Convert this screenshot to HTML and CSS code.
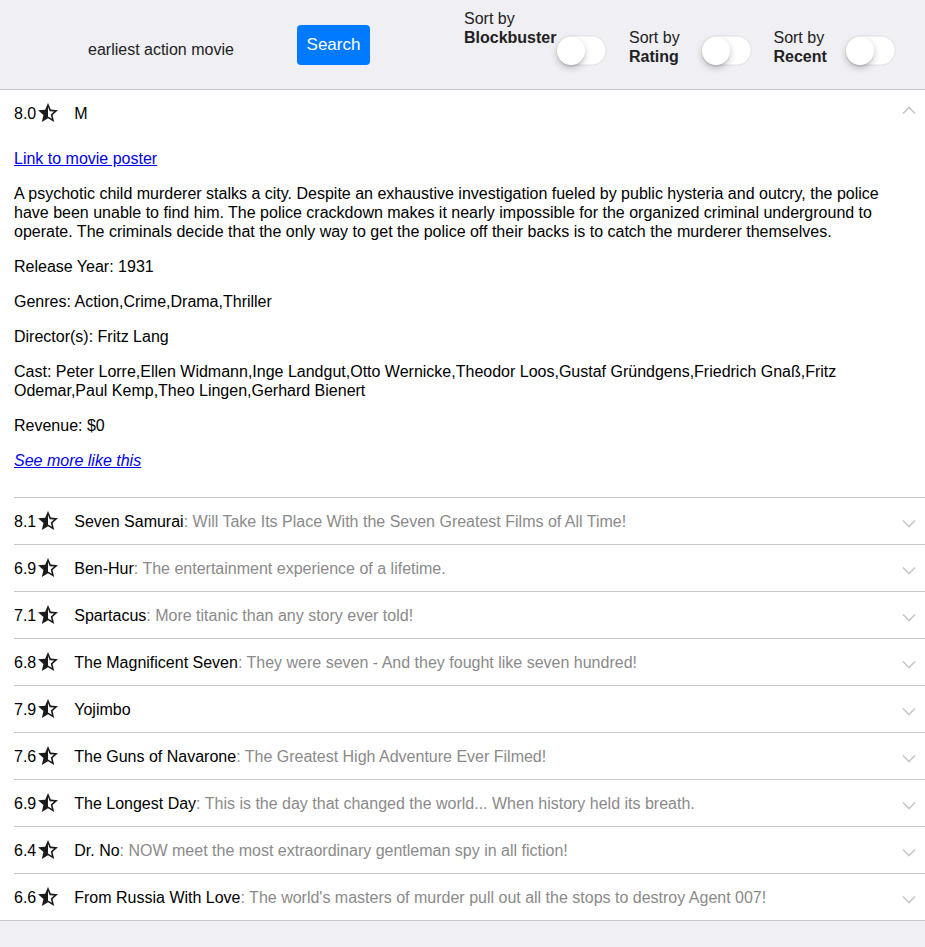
FILE: index.html
```html
<!DOCTYPE html>
<html lang="en">
<head>
<meta charset="utf-8">
<title>Movie search</title>
<link rel="stylesheet" href="styles.css">
</head>
<body>
<header class="toolbar">
  <input class="query" type="text" value="earliest action movie" aria-label="Query">
  <button class="search-btn" type="button">Search</button>
  <div class="sorts">
    <label class="sort sort--raised"><span class="sort-label">Sort by<br><b>Blockbuster</b></span><span class="toggle"><span class="knob"></span></span></label>
    <label class="sort"><span class="sort-label">Sort by<br><b>Rating</b></span><span class="toggle"><span class="knob"></span></span></label>
    <label class="sort"><span class="sort-label">Sort by<br><b>Recent</b></span><span class="toggle"><span class="knob"></span></span></label>
  </div>
</header>
<main class="list">
  <section class="item">
    <div class="item-head">
      <span class="rating">8.0</span>
      <svg class="star" viewBox="0 0 24 24"><path d="M22 9.24l-7.19-.62L12 2 9.19 8.63 2 9.24l5.46 4.730L5.82 21 12 17.27 18.18 21l-1.63-7.03L22 9.24zM12 15.4V6.1l1.71 4.04 4.38.38-3.32 2.88 1 4.28L12 15.4z"/></svg>
      <span class="title">M</span>
      <svg class="chev chev--up" viewBox="0 0 24 24"><path d="M6 11.5l6 6 6-6"/></svg>
    </div>
    <div class="item-body">
      <p><a href="#">Link to movie poster</a></p>
      <p>A psychotic child murderer stalks a city. Despite an exhaustive investigation fueled by public hysteria and outcry, the police have been unable to find him. The police crackdown makes it nearly impossible for the organized criminal underground to operate. The criminals decide that the only way to get the police off their backs is to catch the murderer themselves.</p>
      <p>Release Year: 1931</p>
      <p>Genres: Action,Crime,Drama,Thriller</p>
      <p>Director(s): Fritz Lang</p>
      <p>Cast: Peter Lorre,Ellen Widmann,Inge Landgut,Otto Wernicke,Theodor Loos,Gustaf Gründgens,Friedrich Gnaß,Fritz Odemar,Paul Kemp,Theo Lingen,Gerhard Bienert</p>
      <p>Revenue: $0</p>
      <p><a class="more" href="#">See more like this</a></p>
    </div>
  </section>
  <section class="item"><div class="item-head"><span class="rating">8.1</span><svg class="star" viewBox="0 0 24 24"><path d="M22 9.24l-7.19-.62L12 2 9.19 8.63 2 9.24l5.46 4.73L5.82 21 12 17.27 18.18 21l-1.63-7.03L22 9.24zM12 15.4V6.1l1.71 4.04 4.38.38-3.32 2.88 1 4.28L12 15.4z"/></svg><span class="title">Seven Samurai<span class="tagline">: Will Take Its Place With the Seven Greatest Films of All Time!</span></span><svg class="chev" viewBox="0 0 24 24"><path d="M6 11.5l6 6 6-6"/></svg></div></section>
  <section class="item"><div class="item-head"><span class="rating">6.9</span><svg class="star" viewBox="0 0 24 24"><path d="M22 9.24l-7.19-.62L12 2 9.19 8.63 2 9.24l5.46 4.73L5.82 21 12 17.27 18.18 21l-1.63-7.03L22 9.24zM12 15.4V6.1l1.71 4.04 4.38.38-3.32 2.88 1 4.28L12 15.4z"/></svg><span class="title">Ben-Hur<span class="tagline">: The entertainment experience of a lifetime.</span></span><svg class="chev" viewBox="0 0 24 24"><path d="M6 11.5l6 6 6-6"/></svg></div></section>
  <section class="item"><div class="item-head"><span class="rating">7.1</span><svg class="star" viewBox="0 0 24 24"><path d="M22 9.24l-7.19-.62L12 2 9.19 8.63 2 9.24l5.46 4.73L5.82 21 12 17.27 18.18 21l-1.63-7.03L22 9.24zM12 15.4V6.1l1.71 4.04 4.38.38-3.32 2.88 1 4.28L12 15.4z"/></svg><span class="title">Spartacus<span class="tagline">: More titanic than any story ever told!</span></span><svg class="chev" viewBox="0 0 24 24"><path d="M6 11.5l6 6 6-6"/></svg></div></section>
  <section class="item"><div class="item-head"><span class="rating">6.8</span><svg class="star" viewBox="0 0 24 24"><path d="M22 9.24l-7.19-.62L12 2 9.19 8.63 2 9.24l5.46 4.73L5.82 21 12 17.27 18.18 21l-1.63-7.03L22 9.24zM12 15.4V6.1l1.71 4.04 4.38.38-3.32 2.88 1 4.28L12 15.4z"/></svg><span class="title">The Magnificent Seven<span class="tagline">: They were seven - And they fought like seven hundred!</span></span><svg class="chev" viewBox="0 0 24 24"><path d="M6 11.5l6 6 6-6"/></svg></div></section>
  <section class="item"><div class="item-head"><span class="rating">7.9</span><svg class="star" viewBox="0 0 24 24"><path d="M22 9.24l-7.19-.62L12 2 9.19 8.63 2 9.24l5.46 4.73L5.82 21 12 17.27 18.18 21l-1.63-7.03L22 9.24zM12 15.4V6.1l1.71 4.04 4.38.38-3.32 2.88 1 4.28L12 15.4z"/></svg><span class="title">Yojimbo</span><svg class="chev" viewBox="0 0 24 24"><path d="M6 11.5l6 6 6-6"/></svg></div></section>
  <section class="item"><div class="item-head"><span class="rating">7.6</span><svg class="star" viewBox="0 0 24 24"><path d="M22 9.24l-7.19-.62L12 2 9.19 8.63 2 9.24l5.46 4.73L5.82 21 12 17.27 18.18 21l-1.63-7.03L22 9.24zM12 15.4V6.1l1.71 4.04 4.38.38-3.32 2.88 1 4.28L12 15.4z"/></svg><span class="title">The Guns of Navarone<span class="tagline">: The Greatest High Adventure Ever Filmed!</span></span><svg class="chev" viewBox="0 0 24 24"><path d="M6 11.5l6 6 6-6"/></svg></div></section>
  <section class="item"><div class="item-head"><span class="rating">6.9</span><svg class="star" viewBox="0 0 24 24"><path d="M22 9.24l-7.19-.62L12 2 9.19 8.63 2 9.24l5.46 4.73L5.82 21 12 17.27 18.18 21l-1.63-7.03L22 9.24zM12 15.4V6.1l1.71 4.04 4.38.38-3.32 2.88 1 4.28L12 15.4z"/></svg><span class="title">The Longest Day<span class="tagline">: This is the day that changed the world... When history held its breath.</span></span><svg class="chev" viewBox="0 0 24 24"><path d="M6 11.5l6 6 6-6"/></svg></div></section>
  <section class="item"><div class="item-head"><span class="rating">6.4</span><svg class="star" viewBox="0 0 24 24"><path d="M22 9.24l-7.19-.62L12 2 9.19 8.63 2 9.24l5.46 4.73L5.82 21 12 17.27 18.18 21l-1.63-7.03L22 9.24zM12 15.4V6.1l1.71 4.04 4.38.38-3.32 2.88 1 4.28L12 15.4z"/></svg><span class="title">Dr. No<span class="tagline">: NOW meet the most extraordinary gentleman spy in all fiction!</span></span><svg class="chev" viewBox="0 0 24 24"><path d="M6 11.5l6 6 6-6"/></svg></div></section>
  <section class="item"><div class="item-head"><span class="rating">6.6</span><svg class="star" viewBox="0 0 24 24"><path d="M22 9.24l-7.19-.62L12 2 9.19 8.63 2 9.24l5.46 4.73L5.82 21 12 17.27 18.18 21l-1.63-7.03L22 9.24zM12 15.4V6.1l1.71 4.04 4.38.38-3.32 2.88 1 4.28L12 15.4z"/></svg><span class="title">From Russia With Love<span class="tagline">: The world's masters of murder pull out all the stops to destroy Agent 007!</span></span><svg class="chev" viewBox="0 0 24 24"><path d="M6 11.5l6 6 6-6"/></svg></div></section>
</main>
</body>
</html>
```

FILE: styles.css
```css
html, body {
  margin: 0;
  padding: 0;
}
body {
  background: #efeff4;
  font-family: "Liberation Sans", Arial, sans-serif;
  font-size: 16px;
  line-height: 19px;
  color: #000;
  min-height: 947px;
}

/* toolbar */
.toolbar {
  display: flex;
  align-items: center;
  height: 89px;
  background: #efeff4;
  border-bottom: 1px solid #c8c7cc;
}
.query {
  box-sizing: border-box;
  width: 209px;
  margin: 10px 0 0 88px;
  padding: 0;
  border: 0;
  outline: none;
  background: transparent;
  font: 16px/19px "Liberation Sans", Arial, sans-serif;
  color: #222;
}
.search-btn {
  width: 73px;
  height: 40px;
  padding: 0;
  border: 0;
  border-radius: 4px;
  background: #007bff;
  color: #fff;
  font: 17px/20px "Liberation Sans", Arial, sans-serif;
}
.sorts {
  align-self: stretch;
  display: flex;
  align-items: flex-end;
  gap: 21.5px;
  margin-left: 94px;
  padding-bottom: 23px;
}
.sort {
  display: flex;
  align-items: flex-end;
  color: #222;
}
.sort-label {
  flex: 0 0 auto;
  min-width: 72px;
  line-height: 19px;
}
.sort-label b {
  font-weight: 700;
}
.sort--raised .sort-label {
  padding-bottom: 19px;
}
.toggle {
  position: relative;
  flex: 0 0 auto;
  box-sizing: border-box;
  width: 51px;
  height: 31px;
  border-radius: 16px;
  background: #fff;
  box-shadow: inset 0 0 0 1.5px #e6e6ea;
}
.knob {
  position: absolute;
  top: 2px;
  left: 1px;
  width: 28px;
  height: 28px;
  border-radius: 50%;
  background: #fff;
  box-shadow: 0 3px 7px rgba(0, 0, 0, 0.22), 0 2px 1px rgba(0, 0, 0, 0.08);
}

/* list */
.list {
  background: #fff;
  border-bottom: 1px solid #c8c7cc;
}
.item {
  margin-left: 14px;
  border-bottom: 1px solid #c8c7cc;
}
.item:last-child {
  border-bottom: 0;
}
.item-head {
  display: flex;
  align-items: center;
  height: 46px;
}
.rating {
  flex: 0 0 auto;
}
.star {
  flex: 0 0 auto;
  width: 24px;
  height: 24px;
  fill: #1b1b1b;
}
.title {
  flex: 1 1 auto;
  margin-left: 14px;
  white-space: nowrap;
  overflow: hidden;
}
.tagline {
  color: #8a8a8a;
}
.chev {
  flex: 0 0 auto;
  width: 24px;
  height: 24px;
  margin-right: 4px;
  fill: none;
  stroke: #c8c7cc;
  stroke-width: 1.6;
}
.chev--up {
  transform: rotate(180deg);
}
.item-body {
  padding: 13px 14px 11px 0;
}
.item-body p {
  margin: 0 0 16px;
}
.item-body a {
  color: #0000ee;
}
.item-body .more {
  font-style: italic;
}
```
